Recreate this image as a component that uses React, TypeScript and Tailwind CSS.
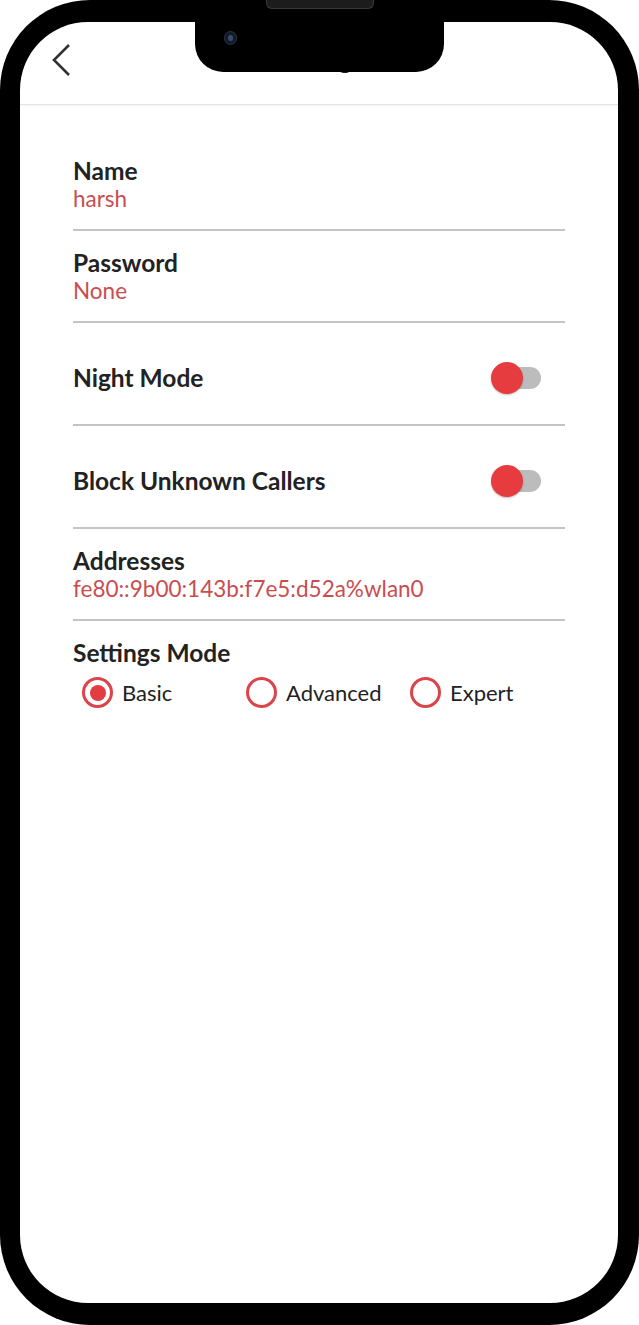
import React from 'react';

const font = { fontFamily: 'Lato, "Open Sans", sans-serif' };

const Toggle: React.FC = () => (
  <div className="relative w-[50px] h-[28px] flex items-center">
    <div className="absolute right-0 w-[40px] h-[22px] rounded-full bg-[#bcbcbc]" />
    <div className="absolute left-0 w-[32px] h-[32px] rounded-full bg-[#e63c40] shadow-[0_1px_2px_rgba(0,0,0,0.25)]" />
  </div>
);

const Radio: React.FC<{ label: string; checked?: boolean }> = ({ label, checked }) => (
  <div className="flex items-center gap-[9px] w-[164px] shrink-0">
    <div className="w-[31px] h-[31px] rounded-full border-[3px] border-[#d9454a] flex items-center justify-center">
      {checked && <div className="w-[16px] h-[16px] rounded-full bg-[#e23d42]" />}
    </div>
    <span className="text-[22px] text-[#222]">{label}</span>
  </div>
);

const Field: React.FC<{ label: string; value: string }> = ({ label, value }) => (
  <div className="pt-[18px] pb-[16px] border-b-2 border-[#c4c4c4]">
    <div className="text-[24.5px] leading-[28px] font-bold text-[#222]">{label}</div>
    <div className="text-[22.5px] leading-[28px] text-[#c94d4f]">{value}</div>
  </div>
);

const SwitchRow: React.FC<{ label: string }> = ({ label }) => (
  <div className="pt-[41px] pb-[32px] border-b-2 border-[#c4c4c4] flex items-center justify-between pr-[24px]">
    <span className="text-[24.5px] leading-[28px] font-bold text-[#222]">{label}</span>
    <Toggle />
  </div>
);

export default function App() {
  return (
    <div className="w-[639px] h-[1325px] bg-white relative" style={font}>
      <div className="w-full h-full bg-black rounded-[90px] pt-[22px] pb-[22px] pl-[20px] pr-[21px]">
        <div className="w-full h-full bg-white rounded-[68px] overflow-hidden flex flex-col">
          <header className="h-[83px] shrink-0 border-b border-[#e4e4e4] shadow-[0_1px_3px_rgba(0,0,0,0.06)] flex items-center relative">
            <svg width="24" height="36" viewBox="0 0 24 36" className="ml-[30px] mt-[-6px]">
              <polyline points="19,3 4,18 19,33" fill="none" stroke="#333" strokeWidth="2.6" />
            </svg>
            <div className="absolute left-0 right-0 top-[20px] text-center text-[24px] font-bold text-[#222]">Settings</div>
          </header>
          <main className="px-[53px] pt-[34px]">
            <Field label="Name" value="harsh" />
            <Field label="Password" value="None" />
            <SwitchRow label="Night Mode" />
            <SwitchRow label="Block Unknown Callers" />
            <Field label="Addresses" value="fe80::9b00:143b:f7e5:d52a%wlan0" />
            <div className="pt-[18px]">
              <div className="text-[24.5px] leading-[28px] font-bold text-[#222]">Settings Mode</div>
              <div className="flex mt-[9px] ml-[9px]">
                <Radio label="Basic" checked />
                <Radio label="Advanced" />
                <Radio label="Expert" />
              </div>
            </div>
          </main>
        </div>
      </div>
      {/* notch */}
      <div className="absolute top-0 left-[195px] w-[249px] h-[72px] bg-black rounded-b-[28px]">
        <div className="absolute left-[29px] top-[31px] w-[13px] h-[14px] rounded-full bg-[#141a26] border border-[#2a3345]">
          <div className="absolute left-[3px] top-[3px] w-[5px] h-[6px] rounded-full bg-[#3a4a6a]" />
        </div>
      </div>
      <div className="absolute top-0 left-[266px] w-[108px] h-[9px] rounded-b-[6px] bg-[#1c1c1c] border border-t-0 border-[#3a3a3a]" />
    </div>
  );
}
